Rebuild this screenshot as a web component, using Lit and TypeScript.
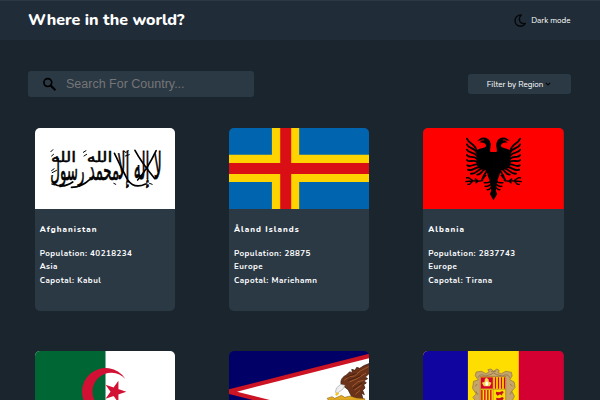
import { LitElement, html, css, svg, TemplateResult } from "lit";
import { customElement, property } from "lit/decorators.js";

interface Country {
  name: string;
  population: number;
  region: string;
  capital: string;
  box: string;
  flag: TemplateResult;
}

const afghanistan = svg`
  <rect x="12" y="24" width="425" height="243" fill="#fff"/>
  <g fill="#000" stroke="#000" stroke-width="1.2" font-family="DejaVu Sans, sans-serif" direction="rtl">
    <text transform="translate(395 176) scale(1 2.2)" font-size="50" textLength="134" lengthAdjust="spacingAndGlyphs">لا إله إلا</text>
    <text transform="translate(266 179) scale(1 1.7)" font-size="50" textLength="208" lengthAdjust="spacingAndGlyphs">محمد رسول</text>
    <text transform="translate(246 125) scale(1 1.15)" font-size="38" textLength="78" lengthAdjust="spacingAndGlyphs">الله</text>
    <text transform="translate(136 125) scale(1 1.15)" font-size="38" textLength="76" lengthAdjust="spacingAndGlyphs">الله</text>
  </g>
  <g fill="none" stroke="#000" stroke-linecap="round">
    <path d="M314 91Q334 128 374 176M378 92Q350 150 322 180M252 100Q270 138 292 180M68 191Q96 207 126 186M122 202Q152 202 178 178M292 180Q312 208 346 192" stroke-width="5"/>
    <path d="M60 95L66 89M62 108L68 103M62 152L70 146M64 158L77 151M158 97L166 92M160 108L168 103M281 93L287 98L294 91M285 108L297 104M62 192L70 195M250 190L256 193M358 190L366 193" stroke-width="3"/>
  </g>`;

const aland = svg`
  <rect x="27" y="24" width="423" height="243" fill="#0064ae"/>
  <path d="M156 24h82v243h-82zM27 104h423v82H27z" fill="#ffd300"/>
  <path d="M181 24h33v243h-33zM27 129h423v33H27z" fill="#da0e15"/>`;

const eagleHalf = svg`
  <path d="M237 96H227C223 88 231 79 226 66C222 53 205 49 195 56L187 62L202 61L193 68C205 65 214 71 214 78C210 86 195 83 185 92V132C187 143 199 149 211 150C219 156 217 168 223 178C226 190 228 205 229 212L225 222L235 239H237Z"/>
  <g fill="none" stroke="#000" stroke-width="5.5" stroke-linecap="round">
    <path d="M187 96C180 68 164 74 156 56"/>
    <path d="M187 100C176 78 162 88 156 73"/>
    <path d="M187 108C174 91 162 102 156 89"/>
    <path d="M187 117C174 104 162 117 156 105"/>
    <path d="M187 126C174 116 164 130 156 120"/>
    <path d="M190 134C178 129 167 144 157 136"/>
    <path d="M196 141C182 139 173 156 159 149"/>
    <path d="M202 145C190 146 184 164 168 161"/>
    <path d="M209 149C201 151 199 165 187 164"/>
    <path d="M215 154L206 169"/>
    <path d="M227 184C220 190 215 188 208 188M228 193C222 200 218 200 211 199M229 202C224 209 221 210 217 209" stroke-width="4.5"/>
  </g>
  <path d="M216 165L204 180L198 179L206 164Z"/>
  <path d="M205 181C193 186 183 181 170 183L151 185M174 182L161 173L153 174M173 184L164 193L157 193M190 183L180 176M189 184L182 190" fill="none" stroke="#000" stroke-width="4"/>
  <path d="M200 60L208 60" stroke="red" stroke-width="2.5"/>`;

const albania = svg`
  <rect x="24" y="24" width="423" height="243" fill="#f00"/>
  <g>${eagleHalf}</g>
  <g transform="translate(472 0) scale(-1 1)">${eagleHalf}</g>`;

const algeria = svg`
  <rect x="12" y="33" width="425" height="243" fill="#fff"/>
  <rect x="12" y="33" width="213" height="243" fill="#006633"/>
  <path d="M285 117A71 71 0 1 0 285 193A57 57 0 1 1 285 117Z" fill="#d21034"/>
  <path d="M288 155L225 176L264 122V188L225 134Z" fill="#d21034"/>`;

const samoa = svg`
  <rect x="27" y="33" width="423" height="243" fill="#000066"/>
  <path d="M27 148L450 41V269L27 162Z" fill="#cc1424"/>
  <path d="M51 155L450 54V256Z" fill="#fff"/>
  <path d="M364 133C361 119 369 110 380 105L390 95L398 99L396 88L406 91L411 82L420 85L432 77L450 70V99L437 111L444 116L433 122L440 129L432 134L436 144L429 151L434 164L425 159L431 180H401L392 163L385 149Z" fill="#6b321a" stroke="#35180c" stroke-width="2"/>
  <path d="M373 121L388 110L404 108L423 92L447 80M389 126L412 116L439 99M397 140L415 125L432 121M404 150L425 136M407 163L421 151" fill="none" stroke="#a3592c" stroke-width="3"/>
  <path d="M380 112L410 100M385 122L423 107M400 146L428 128" fill="none" stroke="#35180c" stroke-width="2"/>
  <path d="M363 133L376 136L369 148L352 160L347 157L350 144Z" fill="#eee" stroke="#888" stroke-width="1.5"/>
  <path d="M350 157L359 160L351 168L346 164Z" fill="#f3c32a"/>
  <path d="M322 175L337 170L345 175L365 166L375 172L391 168L409 174L435 176V181H326Z" fill="#e3ab21" stroke="#7a5310" stroke-width="1.5"/>`;

const andorra = svg`
  <rect x="24" y="33" width="423" height="243" fill="#d50032"/>
  <rect x="24" y="33" width="288" height="243" fill="#fedd00"/>
  <rect x="24" y="33" width="135" height="243" fill="#10069f"/>
  <path d="M184 185L174 172L184 162L173 145L176 124L190 120L181 107L184 96L200 94L213 101L223 96L219 89L229 87L236 94L246 87L253 91L250 98L260 101L273 94L290 97L292 108L285 119L298 126L301 142L291 154L299 169L290 186Z" fill="#c6a56b" stroke="#8b714b" stroke-width="2"/>
  <path d="M190 113C193 102 204 103 211 108L229 103L236 98L245 104L263 108C274 102 282 104 284 113M181 139L187 132M293 139L286 132M183 154L189 164M291 154L286 163M229 94L243 94" fill="none" stroke="#8b714b" stroke-width="2.5"/>
  <rect x="196" y="110" width="77" height="90" fill="#fedd00" stroke="#9c7140" stroke-width="2"/>
  <rect x="198" y="112" width="36" height="34" fill="#d50032"/>
  <path d="M207 139L201 128L209 125L210 117L215 113L221 118L222 125L230 128L225 139Z" fill="#f5d64a"/>
  <path d="M211 130L216 123L221 130L218 137H213Z" fill="#fff"/>
  <path d="M242 112V146M251 112V146M260 112V146M269 112V146M201 150V198M210 150V198M219 150V198M228 150V198" stroke="#d50032" stroke-width="4"/>
  <path d="M197 148H273M235 111V198" stroke="#9c7140" stroke-width="1.5"/>
  <path d="M244 155L253 157L263 153L267 157L262 162V167L256 163L248 167L243 161ZM244 173L253 175L263 171L267 175L262 182H245Z" fill="#c4121f"/>`;

const countries: Country[] = [
  { name: "Afghanistan", population: 40218234, region: "Asia", capital: "Kabul", box: "12 24 425 243", flag: afghanistan },
  { name: "Åland Islands", population: 28875, region: "Europe", capital: "Mariehamn", box: "27 24 423 243", flag: aland },
  { name: "Albania", population: 2837743, region: "Europe", capital: "Tirana", box: "24 24 423 243", flag: albania },
  { name: "", population: 0, region: "", capital: "", box: "12 33 425 243", flag: algeria },
  { name: "", population: 0, region: "", capital: "", box: "27 33 423 243", flag: samoa },
  { name: "", population: 0, region: "", capital: "", box: "24 33 423 243", flag: andorra },
];

@customElement("country-card")
export class CountryCard extends LitElement {
  @property({ attribute: false }) country!: Country;

  static styles = css`
    :host {
      display: block;
      height: 183px;
      border-radius: 5px;
      overflow: hidden;
      background: #2b3945;
      color: #fff;
    }
    .flag {
      display: block;
      width: 100%;
      height: 81px;
    }
    .info {
      padding: 14px 5px 0 5.2px;
      font-size: 8px;
      font-weight: 700;
      line-height: 13.5px;
      letter-spacing: 0.48px;
      white-space: nowrap;
    }
    .name {
      margin: 0 0 10px;
      font-size: 8px;
      font-weight: 800;
      line-height: 13.5px;
      letter-spacing: 1.05px;
    }
    .line {
      margin: 0;
    }
  `;

  render() {
    const c = this.country;
    return html`
      <svg class="flag" viewBox=${c.box} preserveAspectRatio="none">${c.flag}</svg>
      ${c.name
        ? html`<div class="info">
            <h2 class="name">${c.name}</h2>
            <p class="line">Population: ${c.population}</p>
            <p class="line">${c.region}</p>
            <p class="line">Capotal: ${c.capital}</p>
          </div>`
        : null}
    `;
  }
}

@customElement("app-root")
export class AppRoot extends LitElement {
  static styles = css`
    :host {
      display: block;
      height: 400px;
      overflow: hidden;
      background: #1b252d;
      color: #fff;
      font-family: Nunito, Lato, sans-serif;
    }
    .header {
      display: flex;
      align-items: center;
      justify-content: space-between;
      box-sizing: border-box;
      height: 40px;
      padding: 0 29.5px 0 28px;
      border-top: 1px solid #2b3945;
      background: #202c37;
    }
    .title {
      margin: 0 0 2px;
      font-size: 16px;
      font-weight: 800;
      line-height: 20px;
    }
    .mode {
      display: flex;
      align-items: center;
      gap: 5px;
      margin-bottom: 1px;
      font-size: 8px;
    }
    .moon {
      width: 13px;
      height: 13px;
    }
    .tools {
      display: flex;
      align-items: center;
      justify-content: space-between;
      height: 26px;
      padding: 31px 29.5px 0 28px;
    }
    .search {
      display: flex;
      align-items: center;
      box-sizing: border-box;
      width: 226px;
      height: 26px;
      padding-left: 14px;
      gap: 9px;
      border-radius: 3px;
      background: #2b3945;
      color: #757575;
      font: 12.5px "Liberation Sans", sans-serif;
    }
    .lens {
      width: 15px;
      height: 15px;
    }
    .filter {
      display: flex;
      align-items: center;
      justify-content: center;
      gap: 2px;
      width: 103px;
      height: 20px;
      border-radius: 3px;
      background: #2b3945;
      font-size: 8px;
    }
    .chevron {
      width: 6px;
      height: 6px;
    }
    .grid {
      display: grid;
      grid-template-columns: repeat(3, 140.7px);
      gap: 40px 53.6px;
      padding: 31px 0 0 34.5px;
    }
  `;

  render() {
    return html`
      <header class="header">
        <h1 class="title">Where in the world?</h1>
        <div class="mode">
          <svg class="moon" viewBox="0 0 13 13">
            <path d="M8.3 .9C4.7 .8 2 3.2 2 6.6C2 10 4.5 12.2 7.6 12.2C9.6 12.2 11.4 11.3 12.3 9.5C9.2 10 6.6 8.5 6.4 5.8C6.2 3.8 7 2 8.3 .9Z" fill="none" stroke="#05080a" stroke-width="1.4" stroke-linejoin="round"/>
          </svg>
          <span>Dark mode</span>
        </div>
      </header>
      <div class="tools">
        <div class="search">
          <svg class="lens" viewBox="0 0 15 15" fill="none" stroke="#000">
            <circle cx="5.8" cy="5.6" r="3.9" stroke-width="1.7"/>
            <path d="M8.7 8.5L13.4 13.2" stroke-width="2.1"/>
          </svg>
          <span>Search For Country...</span>
        </div>
        <div class="filter">
          <span>Filter by Region</span>
          <svg class="chevron" viewBox="0 0 6 6"><path d="M.8 1.8L3 4L5.2 1.8" fill="none" stroke="#05080a" stroke-width="1.1"/></svg>
        </div>
      </div>
      <main class="grid">
        ${countries.map((c) => html`<country-card .country=${c}></country-card>`)}
      </main>
    `;
  }
}
